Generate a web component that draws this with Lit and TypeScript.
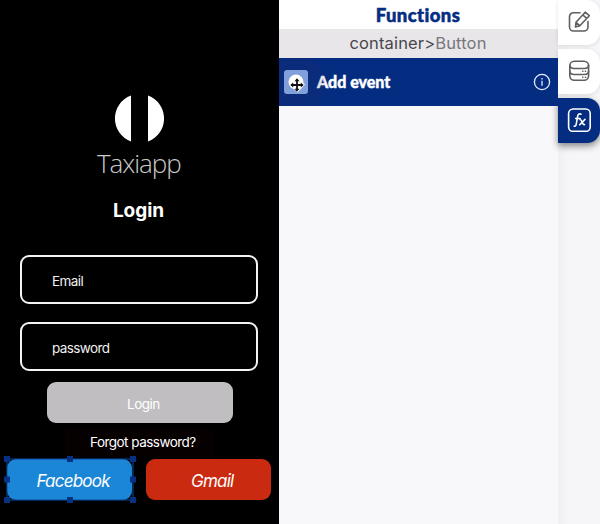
import { LitElement, html, css, svg } from "lit";
import { customElement } from "lit/decorators.js";

@customElement("phone-preview")
class PhonePreview extends LitElement {
  static styles = css`
    :host {
      display: flex;
      flex-direction: column;
      width: 278.5px;
      height: 524px;
      flex: none;
      box-sizing: border-box;
      padding-top: 95px;
      background: #000;
      color: #fff;
      font-family: Inter, "Liberation Sans", sans-serif;
      white-space: nowrap;
    }
    .logo { display: block; width: 50px; height: 47px; margin-left: 114px; flex: none; }
    .brand {
      margin: 3px 0 0 97px;
      font: 300 26px/36px "Open Sans", "Noto Sans", sans-serif;
      letter-spacing: -1.05px;
      color: #c9c9c9;
    }
    .title { margin: 18px 0 0; width: 277px; text-align: center; font: 700 19px/24px Inter, sans-serif; letter-spacing: -0.05px; }
    .field {
      box-sizing: border-box;
      width: 238px;
      height: 49px;
      flex: none;
      margin: 32px 0 0 20px;
      padding: 1px 0 0 30px;
      border: 2px solid #f4f4f4;
      border-radius: 9px;
      font-size: 13.5px;
      line-height: 46px;
      letter-spacing: -0.6px;
      color: #f0f0f0;
    }
    .field + .field { margin-top: 18px; }
    .login {
      width: 186px;
      height: 41px;
      flex: none;
      margin: 11px 0 0 46.5px;
      border-radius: 9px;
      background: #c0bec1;
      font-size: 13.5px;
      line-height: 44px;
      letter-spacing: -0.5px;
      text-indent: 80.5px;
    }
    .forgot {
      width: 148px;
      height: 28px;
      flex: none;
      margin: 6px 0 2px 65px;
      background: #070001;
      text-indent: 25px;
      font-size: 13.5px;
      line-height: 27px;
      letter-spacing: -0.53px;
    }
    .social { display: flex; gap: 13.5px; padding-left: 6.5px; }
    .button {
      position: relative;
      width: 125.5px;
      height: 41px;
      border-radius: 9px;
      font-size: 17px;
      font-style: italic;
      line-height: 44px;
      letter-spacing: -0.78px;
    }
    .facebook { background: #1b86d6; text-indent: 30px; }
    .gmail { background: #ca2b10; text-indent: 45.5px; }
    .selection { position: absolute; inset: -4px; width: 134px; height: 49px; }
  `;

  render() {
    const handles = [[4, 4], [67, 4], [130, 4], [4, 24.5], [130, 24.5], [4, 45], [67, 45], [130, 45]];
    return html`
      <svg class="logo" viewBox="0 0 50 47" fill="#fff">
        <path d="M17 .5a24.5 24.5 0 0 0 0 46ZM34 .5a24.5 24.5 0 0 1 0 46Z" />
      </svg>
      <div class="brand">Taxiapp</div>
      <h1 class="title">Login</h1>
      <div class="field">Email</div>
      <div class="field">password</div>
      <div class="login">Login</div>
      <div class="forgot">Forgot password?</div>
      <div class="social">
        <div class="button facebook">
          Facebook
          <svg class="selection" viewBox="0 0 134 49">
            <rect x="4" y="4" width="126" height="41" fill="none" stroke="#0b4ba5" />
            ${handles.map(([x, y]) => svg`<rect x=${x - 3} y=${y - 3} width="6" height="6" fill="#073183" />`)}
          </svg>
        </div>
        <div class="button gmail">Gmail</div>
      </div>
    `;
  }
}

@customElement("functions-panel")
class FunctionsPanel extends LitElement {
  static styles = css`
    :host {
      display: block;
      width: 279px;
      flex: none;
      background: #f8f7fa;
      font-family: Inter, sans-serif;
      white-space: nowrap;
    }
    .heading {
      margin: 0;
      height: 29px;
      background: #fff;
      color: #042d82;
      text-align: center;
      font: 900 18.5px/30px Lato, sans-serif;
      letter-spacing: 0.4px;
      -webkit-text-stroke: 0.5px currentColor;
    }
    .path {
      height: 29px;
      background: #e8e6e9;
      color: #77767a;
      text-align: center;
      font-size: 16.5px;
      line-height: 29px;
      letter-spacing: 0.15px;
    }
    .parent { color: #47464a; }
    .event { position: relative; display: flex; align-items: center; height: 48px; background: #042d82; color: #fff; overflow: hidden; }
    .halo { position: absolute; left: -10px; top: -2px; width: 56px; height: 56px; border-radius: 50%; background: #3c1c4c20; }
    .drag { position: relative; width: 24px; height: 24px; margin-left: 5px; }
    .label { flex: 1; margin-left: 9.5px; font: 900 16px/24px Lato, sans-serif; -webkit-text-stroke: 0.4px currentColor; }
    .info { width: 18px; height: 18px; margin-right: 6.5px; }
  `;

  render() {
    return html`
      <h2 class="heading">Functions</h2>
      <div class="path"><span class="parent">container&gt;</span>Button</div>
      <div class="event">
        <div class="halo"></div>
        <svg class="drag" viewBox="0 0 24 24">
          <rect width="24" height="24" rx="3" fill="#819fdb" />
          <circle cx="12" cy="12" r="7.5" fill="#fff" />
          <path d="M13.5 7.5l7.5 7-7.5 8-7.5-8Z" fill="#fff" />
          <path d="M13 9.5v11M7.5 15h11" stroke="#111" stroke-width="1.8" />
          <path d="M13 8.3l2.5 2.9h-5ZM13 21.7l2.5-2.9h-5ZM6.3 15l2.9-2.5v5ZM19.7 15l-2.9-2.5v5Z" fill="#111" />
        </svg>
        <span class="label">Add event</span>
        <svg class="info" viewBox="0 0 18 18" fill="none" stroke="#e7edfb" stroke-width="1.3">
          <circle cx="9" cy="9" r="7.6" />
          <path d="M9 7.8v5M9 5v1.5" />
        </svg>
      </div>
    `;
  }
}

@customElement("tool-tabs")
class ToolTabs extends LitElement {
  static styles = css`
    :host { display: flex; flex-direction: column; gap: 4px; width: 42.5px; flex: none; background: linear-gradient(90deg, #f0eff1, #f6f5f8 12px); }
    .tab {
      display: flex;
      box-sizing: border-box;
      height: 45px;
      padding: 10px 0 0 9px;
      border-radius: 0 13px 13px 0;
      background: #fff;
      box-shadow: 0 1px 4px #0000001c;
      color: #5f5e61;
    }
    .active { background: #042d82; color: #fff; box-shadow: 0 3px 7px #0007; }
    .icon { width: 24px; height: 24px; fill: none; stroke: currentColor; stroke-width: 1.6; stroke-linecap: round; stroke-linejoin: round; }
  `;

  render() {
    return html`
      <div class="tab">
        <svg class="icon" viewBox="0 0 24 24">
          <path d="M13 2.7H6.5a4 4 0 0 0-4 4V17a4 4 0 0 0 4 4H17a4 4 0 0 0 4-4v-5.5" />
          <path d="M9 12.3l9.2-10.1 4.1 3.5-9.5 10.1-4.3 1.2ZM15.8 4.9l3.9 3.4M9 12.3l3.8 3.5" />
        </svg>
      </div>
      <div class="tab">
        <svg class="icon" viewBox="0 0 24 24">
          <rect x="2.8" y="2.3" width="18.8" height="19" rx="4.5" />
          <path d="M2.8 6.3c0 3 2 3.2 4.5 3.2h10c2.5 0 4.3-.6 4.3-3.2M2.8 12.3c0 3 2 3.2 4.5 3.2h10c2.5 0 4.3-.6 4.3-3.2M15.7 12.3h.2M18.4 12.3h.2M15.7 18.2h.2M18.4 18.2h.2" />
        </svg>
      </div>
      <div class="tab active">
        <svg class="icon" viewBox="0 0 24 24">
          <rect x="1.6" y="1" width="21.6" height="22.4" rx="4.5" />
          <path d="M14 6.2c-2-.9-3 .2-3.3 2l-1.5 8.2c-.3 1.6-1 2.1-2 1.6M8.7 10.5h4.4M13 11.5c2-.4 2 5.8 4.5 5.1M18 11.4l-5.3 5.4" />
        </svg>
      </div>
    `;
  }
}

@customElement("app-root")
class AppRoot extends LitElement {
  static styles = css`
    :host { display: flex; width: 600px; height: 524px; overflow: hidden; background: #000; }
  `;

  render() {
    return html`<phone-preview></phone-preview><functions-panel></functions-panel><tool-tabs></tool-tabs>`;
  }
}
